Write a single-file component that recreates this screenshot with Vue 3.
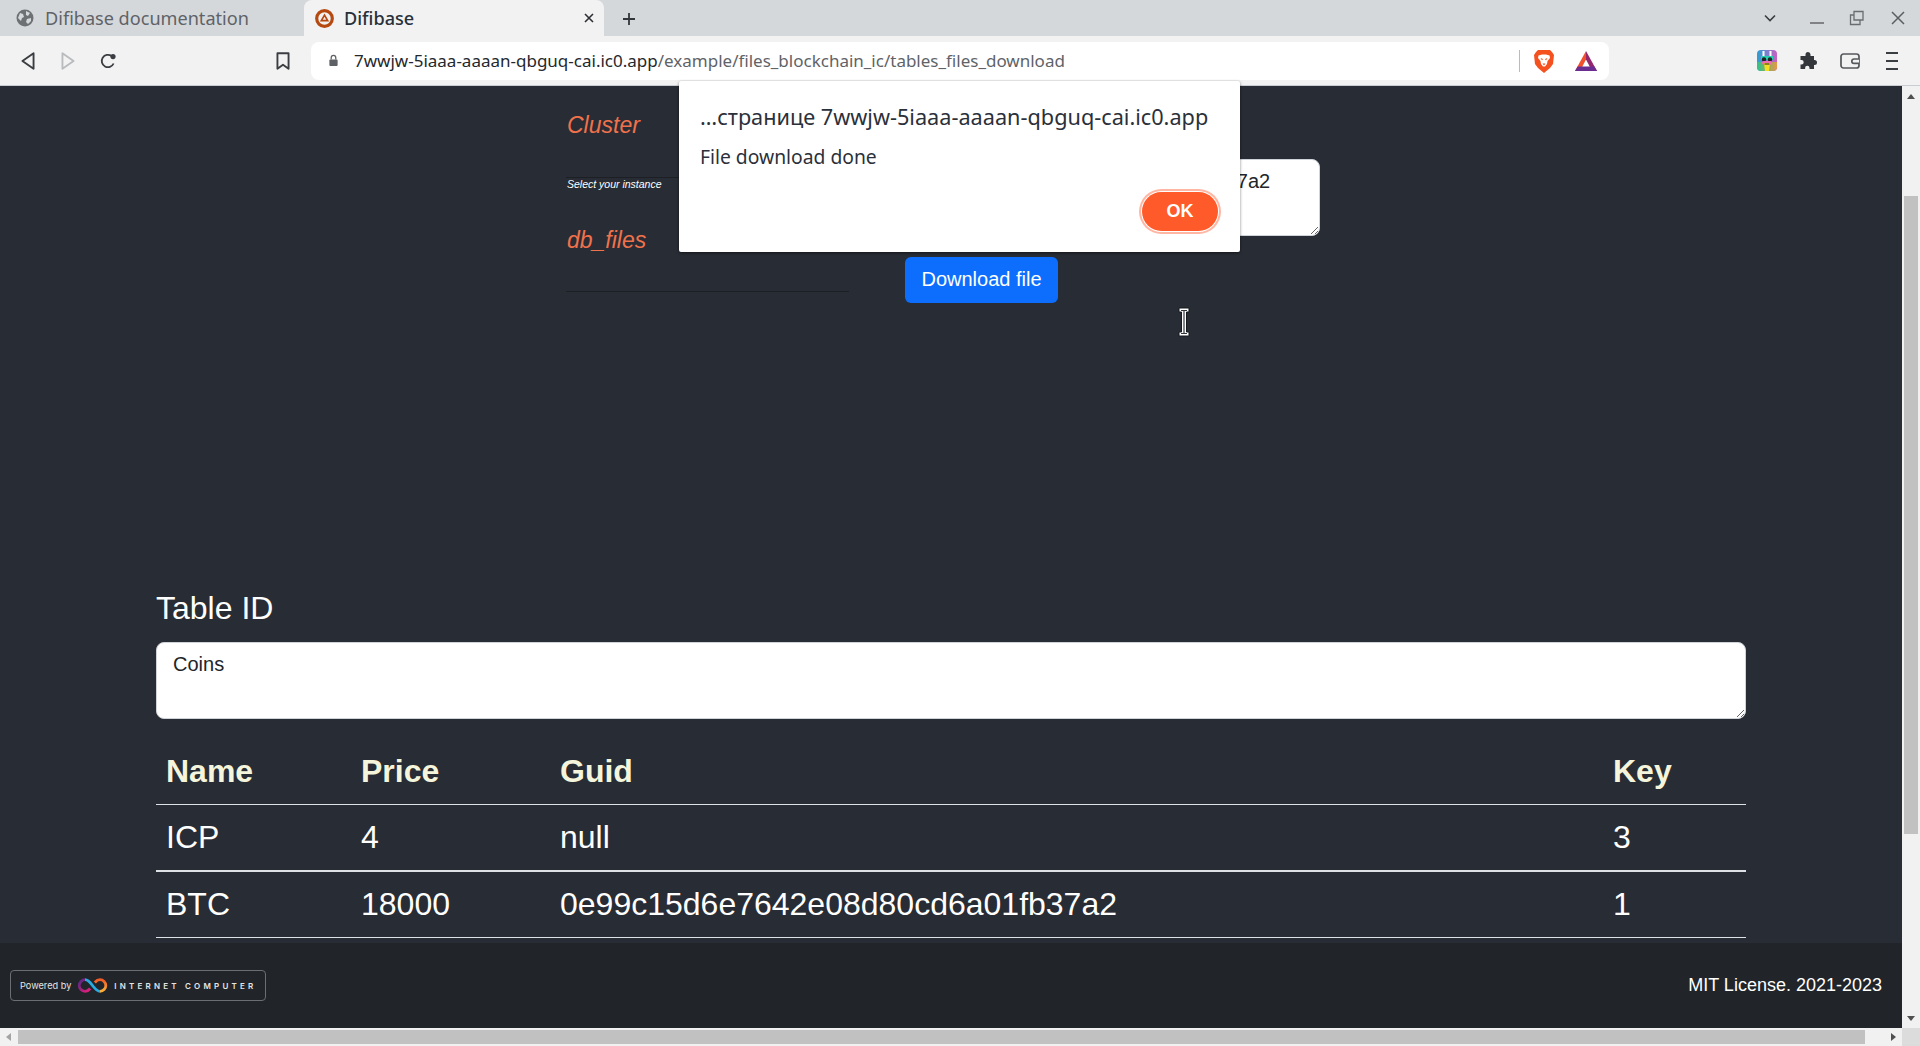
<script setup>
const columns = ['Name', 'Price', 'Guid', 'Key']
const rows = [
  ['ICP', '4', 'null', '3'],
  ['BTC', '18000', '0e99c15d6e7642e08d80cd6a01fb37a2', '1'],
]
</script>

<template>
  <div class="screen">
    <div class="tabstrip">
      <div class="tab">
        <svg class="fav" viewBox="0 0 18 18"><circle cx="9" cy="9" r="8.500" fill="#6e7174" /><path d="M4 4l3 1 1 3-2 1-1 3-3-3zM10 2l4 2-2 3-2-1zM11 10l4-1 0 3-3 3-2-2z" fill="#d5d8db" /></svg>
        <span>Difibase documentation</span>
      </div>
      <div class="tab active">
        <svg class="fav big" viewBox="0 0 18 18"><circle cx="9" cy="9" r="7.400" fill="none" stroke="#b5490f" stroke-width="3" /><path d="M9 5.800l3 5.200H6z" fill="none" stroke="#b5490f" stroke-width="1.600" /></svg>
        <span>Difibase</span>
        <svg class="close" viewBox="0 0 12 12"><path d="M2 2l8 8M10 2l-8 8" stroke="#2c2f33" stroke-width="1.600" /></svg>
      </div>
      <svg class="plus" viewBox="0 0 16 16"><path d="M8 2v12M2 8h12" stroke="#33363a" stroke-width="1.800" /></svg>
      <div class="win">
        <svg class="chev" viewBox="0 0 12 8"><path d="M1 1.500l5 5 5-5" fill="none" stroke="#3a3d41" stroke-width="1.600" /></svg>
        <svg class="min" viewBox="0 0 16 16"><path d="M1 13h14" stroke="#6a6d70" stroke-width="1.600" /></svg>
        <svg class="max" viewBox="0 0 16 16"><path d="M5 1.500h9v8.500H5zM5 5H1.500v9.500H11V10" fill="none" stroke="#6a6d70" stroke-width="1.300" /></svg>
        <svg class="cross" viewBox="0 0 16 16"><path d="M2 2l12 12M14 2L2 14" stroke="#5b5e61" stroke-width="1.500" /></svg>
      </div>
    </div>

    <div class="toolbar">
      <div class="slot"><svg viewBox="0 0 16 18"><path d="M13 2L3 9l10 7z" fill="none" stroke="#3a3d41" stroke-width="1.700" stroke-linejoin="round" /></svg></div>
      <div class="slot"><svg viewBox="0 0 16 18"><path d="M3 2l10 7-10 7z" fill="none" stroke="#b9bcbf" stroke-width="1.700" stroke-linejoin="round" /></svg></div>
      <div class="slot"><svg viewBox="0 0 18 18"><path d="M14.600 11.500A6.200 6.200 0 1 1 12.600 4" fill="none" stroke="#3a3d41" stroke-width="1.800" /><circle cx="14" cy="4.600" r="2.600" fill="#3a3d41" /></svg></div>
      <div class="slot bookmark"><svg viewBox="0 0 16 18"><path d="M3 2h10v14l-5-3.600L3 16z" fill="none" stroke="#3a3d41" stroke-width="1.700" stroke-linejoin="round" /></svg></div>
      <div class="address">
        <svg class="lock" viewBox="0 0 12 14"><path d="M3.500 6V4a2.500 2.500 0 0 1 5 0v2" fill="none" stroke="#5d6064" stroke-width="1.400" /><rect x="1.500" y="6" width="9" height="7" rx="1" fill="#5d6064" /></svg>
        <span class="url"><b>7wwjw-5iaaa-aaaan-qbguq-cai.ic0.app</b>/example/files_blockchain_ic/tables_files_download</span>
        <i class="sep"></i>
        <svg class="brave" viewBox="0 0 20 24">
          <path d="M4 1h12l2 2 2 3-1 9-3 4-6 5-6-5-3-4-1-9 2-3z" fill="#f4511e" />
          <path d="M4.500 6.500l3.500-1h4l3.500 1 .5 2.500-2.500 3-.5 3-2 2.500h-2l-2-2.500-.5-3L4 9z" fill="#fff" />
          <path d="M6.500 9l2.500 1-1 1.500zM13.500 9L11 10l1 1.500zM8.500 14.500h3L10 16.500z" fill="#f4511e" />
        </svg>
        <svg class="bat" viewBox="0 0 22 20">
          <path d="M11 0L0 20h5L11 8.500z" fill="#f2502c" />
          <path d="M11 0l11 20h-5L11 8.500z" fill="#93276f" />
          <path d="M0 20l2.600-4.500h16.800L22 20z" fill="#6a2c91" />
        </svg>
      </div>
      <div class="slot ext first">
        <svg class="pic" viewBox="0 0 20 21">
          <defs>
            <linearGradient id="exg" x1="0" y1="0" x2="1" y2="0"><stop offset="0" stop-color="#2a9fd0" /><stop offset=".5" stop-color="#7f7fd0" /><stop offset="1" stop-color="#c860c0" /></linearGradient>
            <linearGradient id="exb" x1="0" y1="0" x2="1" y2="0"><stop offset="0" stop-color="#2bc48a" /><stop offset="1" stop-color="#e49a45" /></linearGradient>
          </defs>
          <rect width="20" height="21" rx="4" fill="url(#exg)" />
          <path d="M0 12h20v5a4 4 0 0 1-4 4H4a4 4 0 0 1-4-4z" fill="url(#exb)" />
          <rect x="5.500" y="1" width="2" height="6" fill="#fff" /><rect x="12.500" y="1" width="2" height="6" fill="#fff" />
          <rect x="4" y="6" width="12" height="4" fill="#26d0b0" />
          <circle cx="7" cy="9.500" r="2.200" fill="#222" /><circle cx="13" cy="9.500" r="2.200" fill="#222" />
          <rect x="5" y="11" width="10" height="3.500" rx="1.500" fill="#f06bb0" />
          <path d="M7 13h6l-1 8H8z" fill="#f4e020" /><path d="M7.500 13.500h5v1h-5z" fill="#222" />
        </svg>
      </div>
      <div class="slot ext"><svg class="puzzle" viewBox="0 0 18 18"><path d="M6.500 2.500a2.500 2.500 0 0 1 5 0V4H15v4h.5a2.500 2.500 0 0 1 0 5H15v4h-4.500v-1a2.200 2.200 0 0 0-4.400 0v1H1.500v-4.500h1a2.200 2.200 0 0 0 0-4.400h-1V4h5z" fill="#33363a" /></svg></div>
      <div class="slot ext"><svg class="wallet" viewBox="0 0 20 16"><rect x="1" y="1" width="18" height="14" rx="2.500" fill="none" stroke="#55585c" stroke-width="1.700" /><path d="M19 6h-5a2.200 2.200 0 0 0 0 4.400h5" fill="#f2f2f2" stroke="#55585c" stroke-width="1.700" /></svg></div>
      <div class="slot ext"><svg class="menu" viewBox="0 0 12 18"><path d="M0 1h12M0 9h12M0 17h12" stroke="#3a3d41" stroke-width="1.800" /></svg></div>
    </div>

    <div class="viewport">
      <div class="page">
        <main class="content">
          <section class="top">
            <div class="selects">
              <div class="field">Cluster</div>
              <div class="helper">Select your instance</div>
              <div class="field second">db_files</div>
            </div>
            <div class="download">
              <textarea class="input small" readonly>0e99c15d6e7642e08d80cd6a01fb37a2</textarea>
              <button class="btn">Download file</button>
            </div>
          </section>

          <section class="tables">
            <h2>Table ID</h2>
            <textarea class="input wide" readonly>Coins</textarea>
            <table>
              <colgroup>
                <col class="c1" /><col class="c2" /><col /><col class="c4" />
              </colgroup>
              <thead>
                <tr><th v-for="c in columns" :key="c">{{ c }}</th></tr>
              </thead>
              <tbody>
                <tr v-for="r in rows" :key="r[0]">
                  <td v-for="(v, i) in r" :key="i">{{ v }}</td>
                </tr>
              </tbody>
            </table>
          </section>
        </main>
        <footer class="foot">
          <div class="badge">
            <span class="pw">Powered by</span>
            <svg class="inf" viewBox="0 0 32 16">
              <defs>
                <linearGradient id="gb" x1="0" y1="0" x2="0" y2="1"><stop offset="0" stop-color="#f15a24" /><stop offset="1" stop-color="#fbb03b" /></linearGradient>
                <linearGradient id="gc" x1="0" y1="0" x2="1" y2="1"><stop offset="0" stop-color="#522785" /><stop offset="1" stop-color="#ed1e79" /></linearGradient>
              </defs>
              <path d="M8 1.800a6.200 6.200 0 0 0 0 12.400c2.200 0 4-1.200 5.500-3" fill="none" stroke="url(#gc)" stroke-width="3" />
              <path d="M8 1.800c3 0 5 2.200 8 6.200 3 4 5 6.200 8 6.200" fill="none" stroke="#29abe2" stroke-width="3" />
              <path d="M18.500 4.800c1.500-1.800 3.300-3 5.500-3a6.200 6.200 0 0 1 0 12.400" fill="none" stroke="url(#gb)" stroke-width="3" />
            </svg>
            <span class="ic">INTERNET COMPUTER</span>
          </div>
          <div class="license">MIT License. 2021-2023</div>
        </footer>
      </div>
      <div class="vbar">
        <span class="arrow up"></span>
        <div class="vthumb"></div>
        <span class="arrow down"></span>
      </div>
    </div>

    <div class="hbar">
      <span class="arrow left"></span>
      <div class="hthumb"></div>
      <span class="arrow right"></span>
      <div class="corner"></div>
    </div>

    <div class="dialog">
      <div class="d-title">…странице 7wwjw-5iaaa-aaaan-qbguq-cai.ic0.app</div>
      <div class="d-msg">File download done</div>
      <button class="ok">OK</button>
    </div>

    <svg class="cursor" viewBox="0 0 12 30">
      <path d="M1 1h10v4H8.500v20H11v4H1v-4h2.500V5H1z" fill="#fff" stroke="#16181c" stroke-width="1" />
      <path d="M6 3.500v23M3 3.500h6M3 26.500h6" stroke="#33373e" stroke-width="1.200" fill="none" />
    </svg>
  </div>
</template>

<style>
html, body { margin: 0; height: 100%; overflow: hidden; }
</style>

<style scoped>
.screen {
  position: relative;
  width: 1920px;
  height: 1046px;
  display: flex;
  flex-direction: column;
  overflow: hidden;
  font-family: "Liberation Sans", Arial, sans-serif;
  background: #282c34;
}

/* browser chrome */
.tabstrip {
  height: 36px;
  background: #d5d8db;
  display: flex;
  align-items: stretch;
  flex: none;
  font-family: "Noto Sans", sans-serif;
  font-size: 18.100px;
}
.tab {
  width: 304px;
  box-sizing: border-box;
  padding-left: 16px;
  display: flex;
  align-items: center;
  color: #5f6368;
  gap: 11px;
  white-space: nowrap;
}
.tab.active {
  width: 300px;
  padding-left: 11px;
  background: #f2f2f2;
  border-radius: 8px 8px 0 0;
  color: #28303a;
  font-weight: 500;
  gap: 10px;
}
.fav { width: 18px; height: 18px; flex: none; }
.fav.big { width: 19px; height: 19px; }
.close { width: 12px; height: 12px; margin-left: auto; margin-right: 9px; }
.plus { width: 16px; height: 16px; margin: 11px 0 0 17px; }
.win { margin-left: auto; display: flex; align-items: center; position: relative; }
.chev { width: 12px; height: 8px; margin-right: 33px; }
.min { width: 16px; height: 16px; margin-right: 24px; }
.max { width: 16px; height: 16px; margin-right: 25px; }
.cross { width: 16px; height: 16px; margin-right: 14px; }

.toolbar {
  height: 49px;
  background: #f2f2f2;
  border-bottom: 1px solid #c9cdd1;
  flex: none;
  display: flex;
  align-items: center;
  padding-left: 8px;
}
.slot {
  width: 40px;
  display: flex;
  justify-content: center;
  align-items: center;
  flex: none;
}
.slot svg { width: 18px; height: 20px; }
.bookmark { margin-left: 135px; }
.address {
  margin-left: 8px;
  width: 1298px;
  height: 38px;
  background: #fff;
  border-radius: 8px;
  display: flex;
  align-items: center;
  flex: none;
  font-family: "Noto Sans", sans-serif;
}
.lock { width: 11px; height: 13px; margin-left: 17px; }
.url {
  margin-left: 15px;
  font-size: 17px;
  color: #5f6368;
  white-space: nowrap;
}
.url b { font-weight: 400; color: #24282d; }
.sep {
  width: 1px;
  height: 22px;
  background: #b9bcbf;
  margin-left: auto;
}
.brave { width: 20px; height: 24px; margin-left: 14px; }
.bat { width: 22px; height: 20px; margin: 0 12px 0 21px; }
.ext { width: 41.500px; }
.ext.first { margin-left: 137px; }
.slot .pic { width: 20px; height: 21px; }
.slot .puzzle { width: 18px; height: 18px; }
.slot .wallet { width: 20px; height: 16px; }
.slot .menu { width: 12px; height: 18px; margin-left: 1px; }

/* page */
.viewport { flex: 1; min-height: 0; display: flex; }
.page { flex: 1; min-width: 0; display: flex; flex-direction: column; }
.content { flex: 1; min-height: 0; overflow: hidden; color: #fff; }

.top {
  height: 504px;
  box-sizing: border-box;
  padding-left: 566px;
  display: flex;
}
.selects { width: 283px; padding-top: 24px; }
.field {
  font-size: 23px;
  line-height: 30px;
  font-style: italic;
  color: #f0724c;
  padding: 0 0 37px 1px;
  border-bottom: 1px solid #1c1f24;
}
.field.second { margin-top: 35px; padding-bottom: 36px; }
.helper {
  font-size: 10.500px;
  line-height: 12px;
  font-style: italic;
  color: #fff;
  padding-left: 1px;
}
.download { margin-left: 56px; padding-top: 73px; display: flex; flex-direction: column; align-items: flex-start; }
.input {
  display: block;
  box-sizing: border-box;
  background: #fff;
  color: #212529;
  font-family: "Liberation Sans", Arial, sans-serif;
  font-size: 20px;
  line-height: 30px;
  padding: 6px 16px;
  border: 1px solid #ced4da;
  border-radius: 8px;
  outline: none;
  height: 77px;
}
.small { width: 415px; }
.wide { width: 1590px; }
.btn {
  margin-top: 21px;
  width: 153px;
  height: 46px;
  background: #0d6efd;
  color: #fff;
  border: none;
  border-radius: 6px;
  font-family: "Liberation Sans", Arial, sans-serif;
  font-size: 20px;
  padding: 0 0 2px;
}

.tables { padding: 0 156px; }
h2 {
  margin: 0 0 16px;
  font-size: 32px;
  line-height: 36px;
  font-weight: 400;
  color: #fff;
}
table {
  width: 1590px;
  border-collapse: collapse;
  table-layout: fixed;
  font-size: 32px;
}
.c1 { width: 195px; }
.c2 { width: 199px; }
.c4 { width: 143px; }
th {
  text-align: left;
  padding: 34px 10px 14px;
  line-height: 37px;
  color: #f5f5dc;
  font-weight: 700;
  border-bottom: 1px solid #dee2e6;
}
td {
  padding: 14px 10px;
  line-height: 37px;
  color: #fff;
  border-bottom: 1px solid #dee2e6;
}
tbody tr:first-child td { border-bottom-width: 2px; }

.foot {
  height: 85px;
  flex: none;
  background: #212429;
  display: flex;
  align-items: center;
  justify-content: space-between;
  padding: 0 20px 0 10px;
}
.badge {
  width: 256px;
  height: 31px;
  box-sizing: border-box;
  border: 1px solid #6b6e73;
  border-radius: 4px;
  display: flex;
  align-items: center;
  padding-left: 9px;
  color: #e4e4e4;
  font-family: "Inter", sans-serif;
}
.pw { font-size: 9.200px; }
.inf { width: 31px; height: 15px; margin-left: 6px; flex: none; }
.ic {
  margin-left: 6px;
  font-size: 8px;
  font-weight: 600;
  letter-spacing: 3.200px;
  white-space: nowrap;
}
.license { font-size: 18px; color: #fff; }

/* scrollbars */
.vbar {
  width: 18px;
  flex: none;
  background: #f1f1f1;
  position: relative;
}
.vthumb {
  position: absolute;
  left: 2px;
  right: 2px;
  top: 110px;
  height: 638px;
  background: #c1c1c1;
}
.hbar {
  height: 18px;
  flex: none;
  background: #f1f1f1;
  position: relative;
}
.hthumb {
  position: absolute;
  left: 18px;
  width: 1847px;
  top: 2px;
  bottom: 2px;
  background: #c1c1c1;
}
.corner {
  position: absolute;
  right: 0;
  top: 0;
  width: 18px;
  height: 18px;
  background: #dcdcdc;
}
.arrow { position: absolute; width: 0; height: 0; border: 4px solid transparent; }
.arrow.up { left: 5px; top: 8px; border-bottom: 5px solid #505050; border-top: 0; }
.arrow.down { left: 5px; bottom: 7px; border-top: 5px solid #505050; border-bottom: 0; }
.arrow.left { left: 6px; top: 5px; border-right: 5px solid #a3a3a3; border-left: 0; }
.arrow.right { right: 24px; top: 5px; border-left: 5px solid #505050; border-right: 0; }

/* overlays */
.dialog {
  position: absolute;
  left: 679px;
  top: 81px;
  width: 561px;
  height: 171px;
  box-sizing: border-box;
  background: #fff;
  border-radius: 2px;
  box-shadow: 0 1px 3px rgba(0, 0, 0, .5);
  font-family: "Noto Sans", sans-serif;
  color: #2b303a;
  padding: 22px 0 0 21px;
}
.d-title { font-size: 21.700px; line-height: 28px; white-space: nowrap; }
.d-msg { font-size: 19.300px; line-height: 26px; margin-top: 13px; }
.ok {
  position: absolute;
  right: 22px;
  bottom: 21px;
  width: 76px;
  height: 39px;
  box-sizing: border-box;
  border: none;
  border-radius: 20px;
  background: #ff5a29;
  color: #fff;
  font-family: "Liberation Sans", Arial, sans-serif;
  font-weight: 700;
  font-size: 18px;
  padding: 0;
  box-shadow: 0 0 0 1px #fff, 0 0 0 3px #ffb6a3;
}
.cursor {
  position: absolute;
  left: 1178px;
  top: 307px;
  width: 12px;
  height: 30px;
}
</style>
